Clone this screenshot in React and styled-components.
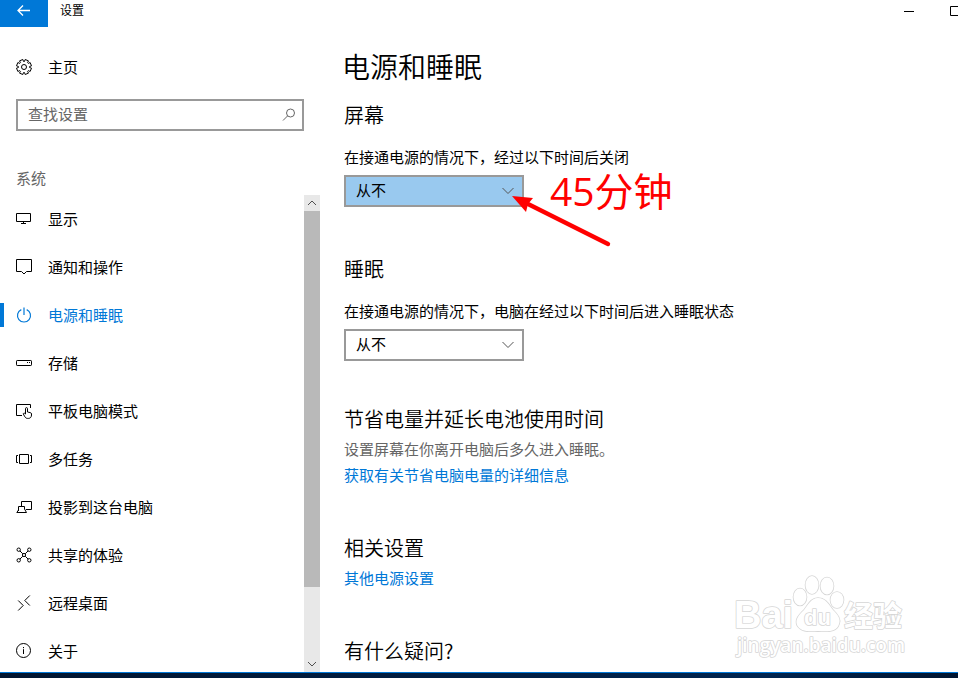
import React, { useState } from "react";
import styled, { createGlobalStyle } from "styled-components";

const GlobalStyle = createGlobalStyle`
    * {
        box-sizing: border-box;
    }
    body {
        margin: 0;
        background: #fff;
        color: #000;
        font-family: "Noto Sans CJK SC", sans-serif;
        font-size: 15px;
        line-height: 20px;
        font-weight: 400;
    }
    button, input, select {
        font: inherit;
        color: inherit;
    }
`;

const Window = styled.div`
    position: relative;
    display: flex;
    flex-direction: column;
    height: 100vh;
    overflow: hidden;
`;

const TitleBar = styled.header`
    display: flex;
    flex: none;
    height: 27px;
    margin-right: -20px;
`;

const BackButton = styled.button`
    display: flex;
    justify-content: center;
    width: 48px;
    padding: 3px 0 0;
    border: none;
    background: #0078d7;
    color: #fff;
`;

const Title = styled.span`
    flex: 1;
    padding-left: 12px;
    font-size: 12px;
`;

const CaptionButton = styled.button`
    display: flex;
    justify-content: center;
    width: 46px;
    padding: 3px 0 0;
    border: none;
    background: none;
`;

const Body = styled.div`
    display: flex;
    flex: 1;
    min-height: 0;
`;

const Sidebar = styled.aside`
    display: flex;
    flex-direction: column;
    flex: none;
    width: 320px;
    padding-top: 16px;
`;

const NavLink = styled.a`
    display: flex;
    align-items: center;
    height: 48px;
    color: ${(props) => (props.$active ? "#0078d7" : "#000")};
    text-decoration: none;

    &::before {
        content: "";
        width: 4px;
        height: 24px;
        margin-right: 12px;
        background: ${(props) => (props.$active ? "#0078d7" : "transparent")};
    }

    svg {
        margin-right: 16px;
    }
`;

const SearchBox = styled.label`
    display: flex;
    align-items: center;
    height: 32px;
    margin: 8px 16px 0;
    padding: 0 5px 0 10px;
    border: 2px solid #999;
    color: #666;
`;

const SearchInput = styled.input`
    flex: 1;
    min-width: 0;
    height: 20px;
    padding: 0 0 2px;
    border: none;
    outline: none;
    background: none;

    &::placeholder {
        color: #666;
        opacity: 1;
    }
`;

const GroupName = styled.div`
    margin: 37px 16px 7px;
    color: #666;
`;

const NavArea = styled.div`
    display: flex;
    flex: 1;
    min-height: 0;
`;

const NavList = styled.nav`
    flex: 1;
    overflow: hidden;
`;

const ScrollBar = styled.div`
    display: flex;
    flex-direction: column;
    width: 16px;
    background: #e8e8e8;
`;

const ScrollButton = styled.button`
    display: flex;
    align-items: center;
    justify-content: center;
    flex: none;
    height: 16px;
    padding: 0;
    border: none;
    background: none;
    color: #505050;
`;

const ScrollTrack = styled.div`
    flex: 1;
`;

const ScrollThumb = styled.div`
    height: 84.5%;
    background: #b9b9b9;
`;

const Main = styled.main`
    flex: 1;
    min-width: 0;
    padding: 19px 24px 0;
    overflow: hidden;
`;

const PageTitle = styled.h1`
    margin: 0 0 15px -2px;
    font-size: 28px;
    line-height: 40px;
    font-weight: 350;
`;

const Section = styled.section`
    margin-bottom: ${(props) => (props.$last ? 44 : 48)}px;
`;

const InfoSection = styled.section`
    margin-bottom: 44px;
`;

const SectionTitle = styled.h2`
    margin: 0 0 3px;
    font-size: 20px;
    line-height: 28px;
    font-weight: 350;
`;

const FieldLabel = styled.label`
    display: block;
    padding: 15px 0 8px;
`;

const SelectBox = styled.div`
    position: relative;
    width: 180px;
`;

const Select = styled.select`
    display: block;
    appearance: none;
    width: 100%;
    height: 32px;
    padding: 0 30px 2px 10px;
    border: 2px solid #999;
    border-radius: 0;
    outline: none;
    background: ${(props) => (props.$highlighted ? "#99c9ef" : "#fff")};
`;

const SelectArrow = styled.svg`
    position: absolute;
    top: 12px;
    right: 10px;
    color: #555;
    pointer-events: none;
`;

const NoteText = styled.span`
    position: absolute;
    top: -8px;
    left: 206px;
    color: #f00;
    font-family: "Open Sans", "Noto Sans CJK SC", sans-serif;
    font-size: 39px;
    line-height: 48px;
    white-space: nowrap;
`;

const NoteArrow = styled.svg`
    position: absolute;
    top: 20px;
    left: 168px;
    pointer-events: none;
`;

const Description = styled.p`
    margin: 0;
    color: #666;
    line-height: 26px;
`;

const TextLink = styled.a`
    display: block;
    color: #0078d7;
    line-height: 26px;
    padding-bottom: 2px;
    text-decoration: none;
`;

const Watermark = styled.svg`
    position: absolute;
    right: 45px;
    bottom: 15px;
    pointer-events: none;
`;

const Taskbar = styled.footer`
    flex: none;
    height: 6px;
    border-top: 1px solid #0078d7;
    background: linear-gradient(90deg, #001530, #002550 80%, #001530);
`;

const Icon = ({ children }) => (
    <svg width="16" height="16" viewBox="0 0 16 16" fill="none" stroke="currentColor" aria-hidden="true">
        {children}
    </svg>
);

// eight teeth around the hub
const gearPath = () => {
    const points = [];
    for (let i = 0; i < 8; i++) {
        const mid = ((i + 0.5) * Math.PI) / 4;
        [[-0.3, 5.6], [-0.24, 7.6], [0.24, 7.6], [0.3, 5.6]].forEach(([turn, r]) => {
            const a = mid + turn;
            points.push(`${(8 + r * Math.sin(a)).toFixed(2)} ${(8 - r * Math.cos(a)).toFixed(2)}`);
        });
    }
    return `M${points.join("L")}Z`;
};

const icons = {
    home: (
        <>
            <path d={gearPath()} strokeLinejoin="round" />
            <circle cx="8" cy="8" r="2.5" />
        </>
    ),
    display: <path d="M.5 2.5h14v8H.5zM7.5 10.5v2M5 12.5h5" />,
    notify: <path d="M.5.5h15v12h-5L8 15l-2.5-2.5h-5z" />,
    power: <path d="M5.3 2.6a6.5 6.5 0 1 0 5.4 0M8 .5V8" strokeWidth="1.2" />,
    storage: (
        <>
            <rect x=".5" y="5.5" width="15" height="5" rx=".7" />
            <path d="M11 7.5h1M13 7.5h1" />
        </>
    ),
    tablet: (
        <>
            <path d="M6 12.5H.5v-11h14V5" />
            <path d="M9.5 11V5.7c0-1.5 2-1.5 2 0V9l2.8.6c.8.2 1.2.6 1.2 1.4v1c0 2-1.2 3.4-3 3.4h-1c-1.5 0-2.2-.9-3-2.2L7.2 10.7c.7-.8 1.6-.6 2.3.3" />
        </>
    ),
    tasks: <path d="M3.5 3.5h9v9h-9zM2 4.5H.5v7H2M14 4.5h1.5v7H14" />,
    project: <path d="M5.5 7V2.5h10v8H10M2.5 12V7.5h6V10l2 3.5H.8L2.5 11" />,
    share: (
        <>
            <circle cx="2.7" cy="2.7" r="1.7" />
            <circle cx="13.3" cy="2.7" r="1.7" />
            <circle cx="2.7" cy="13.3" r="1.7" />
            <circle cx="13.3" cy="13.3" r="1.7" />
            <circle cx="8" cy="8" r="1.6" />
            <path d="M4 4l2.8 2.8M12 4L9.2 6.8M4 12l2.8-2.8M12 12L9.2 9.2" />
        </>
    ),
    remote: <path d="M2.2 5.5l5 5-5 5M13.8.5l-5 5 5 5" />,
    about: (
        <>
            <circle cx="7.5" cy="7.5" r="7" />
            <path d="M7.5 6.2V11M7.5 4v1.2" />
        </>
    ),
};

const navItems = [
    ["display", "显示"],
    ["notify", "通知和操作"],
    ["power", "电源和睡眠"],
    ["storage", "存储"],
    ["tablet", "平板电脑模式"],
    ["tasks", "多任务"],
    ["project", "投影到这台电脑"],
    ["share", "共享的体验"],
    ["remote", "远程桌面"],
    ["about", "关于"],
];

const times = ["从不", "5 分钟", "15 分钟", "30 分钟", "45 分钟", "1 小时"];

function TimeSelect({ id, highlighted, children }) {
    const [value, setValue] = useState(times[0]);
    return (
        <SelectBox>
            <Select id={id} $highlighted={highlighted} value={value} onChange={(e) => setValue(e.target.value)}>
                {times.map((time) => <option key={time}>{time}</option>)}
            </Select>
            <SelectArrow width="12" height="8" viewBox="0 0 12 8" fill="none" stroke="currentColor">
                <path d="M.5 1L6 6.5 11.5 1" />
            </SelectArrow>
            {children}
        </SelectBox>
    );
}

function BaiduMark() {
    return (
        <Watermark width="180" height="90" viewBox="0 0 180 90" fill="#fff" stroke="#d6d6d6" strokeWidth="1.6" strokeLinejoin="round" paintOrder="stroke">
            <g fontFamily="Liberation Sans, sans-serif" fontWeight="700">
                <text x="1" y="55" fontSize="38">Bai</text>
                <ellipse cx="67" cy="24" rx="6.5" ry="8.5" />
                <ellipse cx="79" cy="12" rx="6.5" ry="9" />
                <ellipse cx="94" cy="13" rx="6.5" ry="8.5" />
                <ellipse cx="104" cy="27" rx="6.5" ry="8" />
                <path d="M85 25c8 0 11 7 15 12 5 5 8 9 6 14-2 7-9 8-21 7-11 1-18 0-21-6-2-6 2-10 7-15 4-5 7-12 14-12z" />
                <text x="71" y="52" fontSize="22">du</text>
            </g>
            <text x="111" y="54" fontSize="29" fontWeight="700" fontFamily="Noto Sans CJK SC, sans-serif">经验</text>
            <text x="4" y="79" fontSize="19" fontWeight="600" fontFamily="Open Sans, sans-serif">jingyan.baidu.com</text>
        </Watermark>
    );
}

export default function App() {
    const [active, setActive] = useState("power");

    return (
        <Window>
            <GlobalStyle />
            <TitleBar>
                <BackButton aria-label="返回">
                    <Icon><path d="M2 7.5h12M7 2.5l-5 5 5 5" strokeWidth="1.3" /></Icon>
                </BackButton>
                <Title>设置</Title>
                <CaptionButton aria-label="最小化">
                    <Icon><path d="M3 8.5h10" /></Icon>
                </CaptionButton>
                <CaptionButton aria-label="最大化">
                    <Icon><path d="M3.5 3.5h9v9h-9z" /></Icon>
                </CaptionButton>
            </TitleBar>
            <Body>
                <Sidebar>
                    <NavLink href="#home"><Icon>{icons.home}</Icon>主页</NavLink>
                    <SearchBox>
                        <SearchInput type="text" placeholder="查找设置" aria-label="查找设置" />
                        <Icon>
                            <circle cx="9.5" cy="6" r="4" />
                            <path d="M6.6 8.9L2 13.5" />
                        </Icon>
                    </SearchBox>
                    <GroupName>系统</GroupName>
                    <NavArea>
                        <NavList>
                            {navItems.map(([id, name]) => (
                                <NavLink key={id} href={`#${id}`} $active={id === active} onClick={() => setActive(id)}>
                                    <Icon>{icons[id]}</Icon>{name}
                                </NavLink>
                            ))}
                        </NavList>
                        <ScrollBar>
                            <ScrollButton aria-label="向上滚动">
                                <Icon><path d="M4 10l4-4 4 4" /></Icon>
                            </ScrollButton>
                            <ScrollTrack><ScrollThumb /></ScrollTrack>
                            <ScrollButton aria-label="向下滚动">
                                <Icon><path d="M4 6l4 4 4-4" /></Icon>
                            </ScrollButton>
                        </ScrollBar>
                    </NavArea>
                </Sidebar>
                <Main>
                    <PageTitle>电源和睡眠</PageTitle>
                    <Section>
                        <SectionTitle>屏幕</SectionTitle>
                        <FieldLabel htmlFor="screen">在接通电源的情况下，经过以下时间后关闭</FieldLabel>
                        <TimeSelect id="screen" highlighted>
                            <NoteText>45分钟</NoteText>
                            <NoteArrow width="100" height="52" viewBox="0 0 100 52" fill="#f00">
                                <path d="M14 8L96 49" stroke="#f00" strokeWidth="4.4" strokeLinecap="round" />
                                <path d="M0 1l21 2-5 6-2 8z" />
                            </NoteArrow>
                        </TimeSelect>
                    </Section>
                    <Section $last>
                        <SectionTitle>睡眠</SectionTitle>
                        <FieldLabel htmlFor="sleep">在接通电源的情况下，电脑在经过以下时间后进入睡眠状态</FieldLabel>
                        <TimeSelect id="sleep" />
                    </Section>
                    <InfoSection>
                        <SectionTitle>节省电量并延长电池使用时间</SectionTitle>
                        <Description>设置屏幕在你离开电脑后多久进入睡眠。</Description>
                        <TextLink href="#battery">获取有关节省电脑电量的详细信息</TextLink>
                    </InfoSection>
                    <InfoSection>
                        <SectionTitle>相关设置</SectionTitle>
                        <TextLink href="#more">其他电源设置</TextLink>
                    </InfoSection>
                    <InfoSection>
                        <SectionTitle>有什么疑问?</SectionTitle>
                    </InfoSection>
                </Main>
            </Body>
            <BaiduMark />
            <Taskbar />
        </Window>
    );
}
